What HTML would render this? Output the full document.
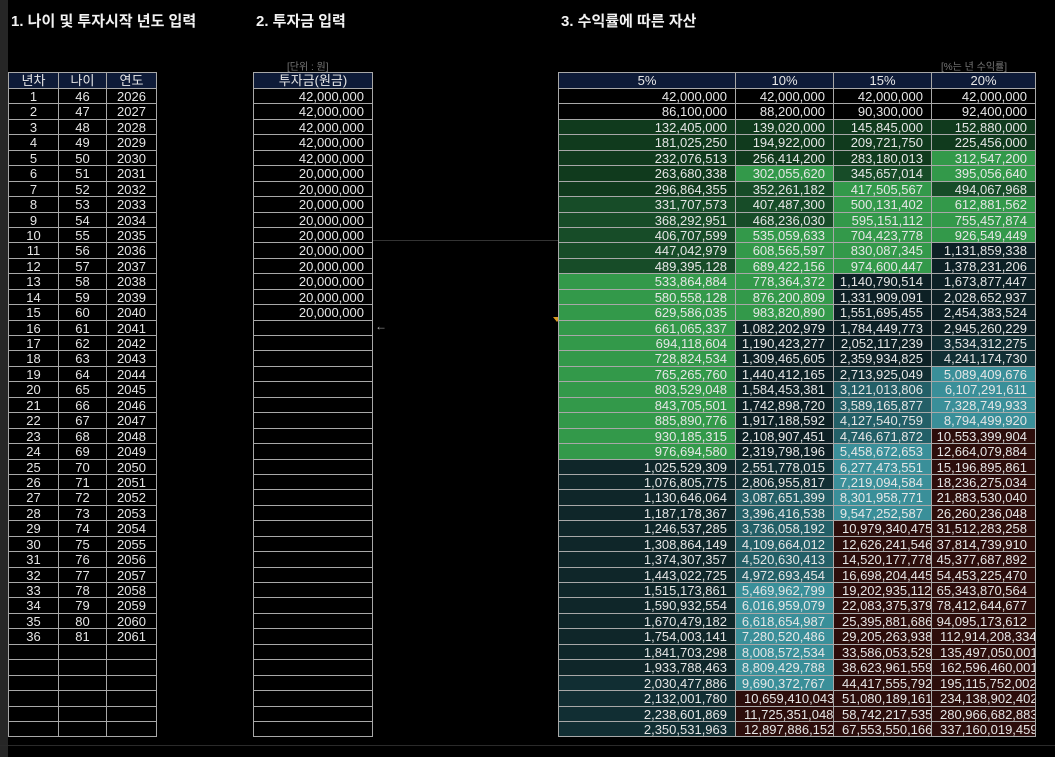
<!DOCTYPE html>
<html><head><meta charset="utf-8"><style>
*{margin:0;padding:0;box-sizing:border-box}
body{width:1055px;height:757px;background:#000;position:relative;overflow:hidden;font-family:"Liberation Sans","Noto Sans CJK KR",sans-serif;color:#e6e6e6}
.t{position:absolute;top:10px;font-size:15px;font-weight:bold;color:#f2f2f2}
.n{position:absolute;top:58px;font-size:10px;color:#777}
.g{position:absolute;top:72px;display:grid;border-left:1px solid #a8a8a8;border-top:1px solid #a8a8a8;grid-template-rows:16px repeat(42,15.44px)}
.g>div{border-right:1px solid #a8a8a8;border-bottom:1px solid #a8a8a8;font-size:13px;line-height:15px;white-space:nowrap;overflow:hidden}
.g>.h{background:#0e1b38;text-align:center;color:#e8e8e8}
.c{text-align:center}
.r{text-align:right;padding-right:8px}
.o{text-align:left;padding-left:8px}
.k{background:#000}.a{background:#103a1d}.b{background:#174c28}.d{background:#33994a}
.e{background:#0f2629}.f{background:#112e33}.i{background:#235f67}.j{background:#3a8f99}.x{background:#2c0d0b}.y{background:#0d2025}
</style></head><body>
<div style="position:absolute;left:0;top:0;width:8px;height:757px;background:#262626"></div>
<div style="position:absolute;left:0;top:745px;width:1055px;height:1px;background:#2a2a2a"></div>
<div style="position:absolute;left:372px;top:240px;width:186px;height:1px;background:#333"></div>
<div style="position:absolute;left:375px;top:319px;font-size:12px;color:#aaa">←</div>
<div style="position:absolute;left:553px;top:317px;width:0;height:0;border-left:4px solid transparent;border-right:4px solid transparent;border-top:5px solid #d99a20"></div>
<div class="t" style="left:11px">1. 나이 및 투자시작 년도 입력</div>
<div class="t" style="left:256px">2. 투자금 입력</div>
<div class="t" style="left:561px">3. 수익률에 따른 자산</div>
<div class="n" style="left:287px">[단위 : 원]</div>
<div class="n" style="left:941px">[%는 년 수익률]</div>

<div class="g" style="left:8px;grid-template-columns:50px 48px 50px">
<div class="h">년차</div><div class="h">나이</div><div class="h">연도</div>
<div class="c">1</div><div class="c">46</div><div class="c">2026</div>
<div class="c">2</div><div class="c">47</div><div class="c">2027</div>
<div class="c">3</div><div class="c">48</div><div class="c">2028</div>
<div class="c">4</div><div class="c">49</div><div class="c">2029</div>
<div class="c">5</div><div class="c">50</div><div class="c">2030</div>
<div class="c">6</div><div class="c">51</div><div class="c">2031</div>
<div class="c">7</div><div class="c">52</div><div class="c">2032</div>
<div class="c">8</div><div class="c">53</div><div class="c">2033</div>
<div class="c">9</div><div class="c">54</div><div class="c">2034</div>
<div class="c">10</div><div class="c">55</div><div class="c">2035</div>
<div class="c">11</div><div class="c">56</div><div class="c">2036</div>
<div class="c">12</div><div class="c">57</div><div class="c">2037</div>
<div class="c">13</div><div class="c">58</div><div class="c">2038</div>
<div class="c">14</div><div class="c">59</div><div class="c">2039</div>
<div class="c">15</div><div class="c">60</div><div class="c">2040</div>
<div class="c">16</div><div class="c">61</div><div class="c">2041</div>
<div class="c">17</div><div class="c">62</div><div class="c">2042</div>
<div class="c">18</div><div class="c">63</div><div class="c">2043</div>
<div class="c">19</div><div class="c">64</div><div class="c">2044</div>
<div class="c">20</div><div class="c">65</div><div class="c">2045</div>
<div class="c">21</div><div class="c">66</div><div class="c">2046</div>
<div class="c">22</div><div class="c">67</div><div class="c">2047</div>
<div class="c">23</div><div class="c">68</div><div class="c">2048</div>
<div class="c">24</div><div class="c">69</div><div class="c">2049</div>
<div class="c">25</div><div class="c">70</div><div class="c">2050</div>
<div class="c">26</div><div class="c">71</div><div class="c">2051</div>
<div class="c">27</div><div class="c">72</div><div class="c">2052</div>
<div class="c">28</div><div class="c">73</div><div class="c">2053</div>
<div class="c">29</div><div class="c">74</div><div class="c">2054</div>
<div class="c">30</div><div class="c">75</div><div class="c">2055</div>
<div class="c">31</div><div class="c">76</div><div class="c">2056</div>
<div class="c">32</div><div class="c">77</div><div class="c">2057</div>
<div class="c">33</div><div class="c">78</div><div class="c">2058</div>
<div class="c">34</div><div class="c">79</div><div class="c">2059</div>
<div class="c">35</div><div class="c">80</div><div class="c">2060</div>
<div class="c">36</div><div class="c">81</div><div class="c">2061</div>
<div></div><div></div><div></div><div></div><div></div><div></div>
<div></div><div></div><div></div><div></div><div></div><div></div>
<div></div><div></div><div></div><div></div><div></div><div></div>
</div>

<div class="g" style="left:253px;grid-template-columns:119px">
<div class="h">투자금(원금)</div>
<div class="r">42,000,000</div><div class="r">42,000,000</div><div class="r">42,000,000</div><div class="r">42,000,000</div><div class="r">42,000,000</div>
<div class="r">20,000,000</div><div class="r">20,000,000</div><div class="r">20,000,000</div><div class="r">20,000,000</div><div class="r">20,000,000</div>
<div class="r">20,000,000</div><div class="r">20,000,000</div><div class="r">20,000,000</div><div class="r">20,000,000</div><div class="r">20,000,000</div>
<div></div><div></div><div></div><div></div><div></div><div></div><div></div><div></div><div></div>
<div></div><div></div><div></div><div></div><div></div><div></div><div></div><div></div><div></div>
<div></div><div></div><div></div><div></div><div></div><div></div><div></div><div></div><div></div>
</div>

<div class="g" style="left:558px;grid-template-columns:177px 98px 98px 104px">
<div class="h">5%</div><div class="h">10%</div><div class="h">15%</div><div class="h">20%</div>
<div class="r k">42,000,000</div><div class="r k">42,000,000</div><div class="r k">42,000,000</div><div class="r k">42,000,000</div>
<div class="r k">86,100,000</div><div class="r k">88,200,000</div><div class="r k">90,300,000</div><div class="r k">92,400,000</div>
<div class="r a">132,405,000</div><div class="r a">139,020,000</div><div class="r a">145,845,000</div><div class="r a">152,880,000</div>
<div class="r a">181,025,250</div><div class="r a">194,922,000</div><div class="r a">209,721,750</div><div class="r a">225,456,000</div>
<div class="r a">232,076,513</div><div class="r a">256,414,200</div><div class="r a">283,180,013</div><div class="r d">312,547,200</div>
<div class="r a">263,680,338</div><div class="r d">302,055,620</div><div class="r b">345,657,014</div><div class="r d">395,056,640</div>
<div class="r a">296,864,355</div><div class="r b">352,261,182</div><div class="r d">417,505,567</div><div class="r b">494,067,968</div>
<div class="r b">331,707,573</div><div class="r b">407,487,300</div><div class="r d">500,131,402</div><div class="r d">612,881,562</div>
<div class="r b">368,292,951</div><div class="r b">468,236,030</div><div class="r d">595,151,112</div><div class="r d">755,457,874</div>
<div class="r b">406,707,599</div><div class="r d">535,059,633</div><div class="r d">704,423,778</div><div class="r d">926,549,449</div>
<div class="r b">447,042,979</div><div class="r d">608,565,597</div><div class="r d">830,087,345</div><div class="r y">1,131,859,338</div>
<div class="r b">489,395,128</div><div class="r d">689,422,156</div><div class="r d">974,600,447</div><div class="r y">1,378,231,206</div>
<div class="r d">533,864,884</div><div class="r d">778,364,372</div><div class="r y">1,140,790,514</div><div class="r y">1,673,877,447</div>
<div class="r d">580,558,128</div><div class="r d">876,200,809</div><div class="r y">1,331,909,091</div><div class="r y">2,028,652,937</div>
<div class="r d">629,586,035</div><div class="r d">983,820,890</div><div class="r y">1,551,695,455</div><div class="r y">2,454,383,524</div>
<div class="r d">661,065,337</div><div class="r y">1,082,202,979</div><div class="r y">1,784,449,773</div><div class="r y">2,945,260,229</div>
<div class="r d">694,118,604</div><div class="r y">1,190,423,277</div><div class="r y">2,052,117,239</div><div class="r f">3,534,312,275</div>
<div class="r d">728,824,534</div><div class="r y">1,309,465,605</div><div class="r y">2,359,934,825</div><div class="r f">4,241,174,730</div>
<div class="r d">765,265,760</div><div class="r y">1,440,412,165</div><div class="r f">2,713,925,049</div><div class="r j">5,089,409,676</div>
<div class="r d">803,529,048</div><div class="r y">1,584,453,381</div><div class="r i">3,121,013,806</div><div class="r j">6,107,291,611</div>
<div class="r d">843,705,501</div><div class="r y">1,742,898,720</div><div class="r i">3,589,165,877</div><div class="r j">7,328,749,933</div>
<div class="r d">885,890,776</div><div class="r y">1,917,188,592</div><div class="r i">4,127,540,759</div><div class="r j">8,794,499,920</div>
<div class="r d">930,185,315</div><div class="r y">2,108,907,451</div><div class="r i">4,746,671,872</div><div class="r x">10,553,399,904</div>
<div class="r d">976,694,580</div><div class="r y">2,319,798,196</div><div class="r j">5,458,672,653</div><div class="r x">12,664,079,884</div>
<div class="r e">1,025,529,309</div><div class="r f">2,551,778,015</div><div class="r j">6,277,473,551</div><div class="r x">15,196,895,861</div>
<div class="r e">1,076,805,775</div><div class="r f">2,806,955,817</div><div class="r j">7,219,094,584</div><div class="r x">18,236,275,034</div>
<div class="r e">1,130,646,064</div><div class="r i">3,087,651,399</div><div class="r j">8,301,958,771</div><div class="r x">21,883,530,040</div>
<div class="r e">1,187,178,367</div><div class="r i">3,396,416,538</div><div class="r j">9,547,252,587</div><div class="r x">26,260,236,048</div>
<div class="r e">1,246,537,285</div><div class="r i">3,736,058,192</div><div class="o x">10,979,340,475</div><div class="r x">31,512,283,258</div>
<div class="r e">1,308,864,149</div><div class="r i">4,109,664,012</div><div class="o x">12,626,241,546</div><div class="r x">37,814,739,910</div>
<div class="r e">1,374,307,357</div><div class="r i">4,520,630,413</div><div class="o x">14,520,177,778</div><div class="r x">45,377,687,892</div>
<div class="r e">1,443,022,725</div><div class="r i">4,972,693,454</div><div class="o x">16,698,204,445</div><div class="r x">54,453,225,470</div>
<div class="r e">1,515,173,861</div><div class="r j">5,469,962,799</div><div class="o x">19,202,935,112</div><div class="r x">65,343,870,564</div>
<div class="r e">1,590,932,554</div><div class="r j">6,016,959,079</div><div class="o x">22,083,375,379</div><div class="r x">78,412,644,677</div>
<div class="r e">1,670,479,182</div><div class="r j">6,618,654,987</div><div class="o x">25,395,881,686</div><div class="r x">94,095,173,612</div>
<div class="r e">1,754,003,141</div><div class="r j">7,280,520,486</div><div class="o x">29,205,263,938</div><div class="o x">112,914,208,334</div>
<div class="r e">1,841,703,298</div><div class="r j">8,008,572,534</div><div class="o x">33,586,053,529</div><div class="o x">135,497,050,001</div>
<div class="r e">1,933,788,463</div><div class="r j">8,809,429,788</div><div class="o x">38,623,961,559</div><div class="o x">162,596,460,001</div>
<div class="r f">2,030,477,886</div><div class="r j">9,690,372,767</div><div class="o x">44,417,555,792</div><div class="o x">195,115,752,002</div>
<div class="r f">2,132,001,780</div><div class="o x">10,659,410,043</div><div class="o x">51,080,189,161</div><div class="o x">234,138,902,402</div>
<div class="r f">2,238,601,869</div><div class="o x">11,725,351,048</div><div class="o x">58,742,217,535</div><div class="o x">280,966,682,883</div>
<div class="r f">2,350,531,963</div><div class="o x">12,897,886,152</div><div class="o x">67,553,550,166</div><div class="o x">337,160,019,459</div>
</div>
</body></html>
